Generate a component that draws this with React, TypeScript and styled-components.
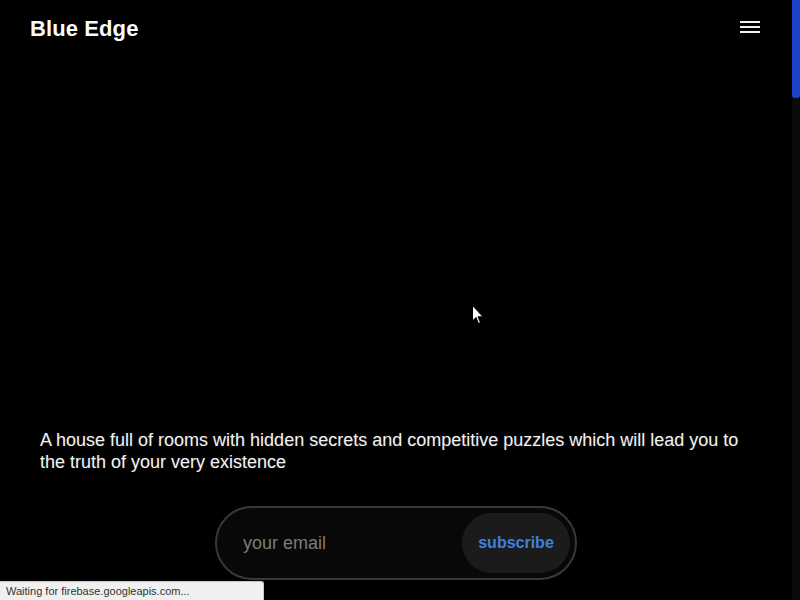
import React from 'react';
import styled, { createGlobalStyle } from 'styled-components';

const GlobalStyle = createGlobalStyle`
  html, body {
    margin: 0;
    padding: 0;
    background: #000;
    color: #fff;
    font-family: "Liberation Sans", Arial, sans-serif;
    overflow: hidden;
  }
`;

const Page = styled.div`
  display: flex;
  flex-direction: column;
  width: calc(100% - 8px);
  height: 100vh;
`;

const Header = styled.header`
  display: flex;
  align-items: center;
  justify-content: space-between;
  height: 58px;
  padding: 0 32px 0 30px;
`;

const Logo = styled.h1`
  margin: 0;
  font-size: 22px;
  font-weight: 700;
  color: #fafafa;
  letter-spacing: 0.1px;
`;

const MenuButton = styled.button`
  display: flex;
  flex-direction: column;
  gap: 3px;
  padding: 0;
  margin-top: -4px;
  background: none;
  border: none;
  cursor: pointer;

  span {
    display: block;
    width: 20px;
    height: 2px;
    background: #f2f2f2;
  }
`;

const Hero = styled.section`
  flex: 1;
  display: flex;
  flex-direction: column;
  justify-content: flex-end;
  padding: 0 40px 20px;
`;

const Tagline = styled.p`
  margin: 0 0 33px;
  font-size: 18px;
  line-height: 22px;
  color: #f2f2f2;
  text-shadow: 0 0 2px rgba(255, 255, 255, 0.15);
`;

const SubscribeForm = styled.form`
  align-self: center;
  display: flex;
  align-items: center;
  justify-content: space-between;
  width: 362px;
  height: 74px;
  box-sizing: border-box;
  border: 2px solid #383838;
  border-radius: 37px;
  background: #080808;
  padding: 0 5px 0 24px;
`;

const EmailInput = styled.input`
  flex: 1;
  min-width: 0;
  background: transparent;
  border: none;
  outline: none;
  color: #ddd;
  font-family: "Liberation Sans", Arial, sans-serif;
  font-size: 18px;

  &::placeholder {
    color: #7c7c7c;
  }
`;

const SubscribeButton = styled.button`
  width: 108px;
  height: 60px;
  border: none;
  border-radius: 30px;
  background: #1b1b1b;
  color: #3f80e0;
  font-family: "Liberation Sans", Arial, sans-serif;
  font-size: 16px;
  font-weight: 700;
  cursor: pointer;
`;

const ScrollTrack = styled.div`
  position: fixed;
  top: 0;
  right: 0;
  width: 8px;
  height: 100vh;
  background: #0b0b0b;
`;

const ScrollThumb = styled.div`
  height: 98px;
  background: #1c44c8;
  border-radius: 0 0 3px 3px;
`;

const StatusBar = styled.div`
  position: fixed;
  left: 0;
  bottom: 0;
  width: 264px;
  height: 19px;
  box-sizing: border-box;
  padding: 3px 0 0 6px;
  background: #f0f0f0;
  border: 1px solid #c8c8c8;
  border-left: none;
  border-bottom: none;
  border-top-right-radius: 3px;
  color: #333;
  font-family: "Liberation Sans", Arial, sans-serif;
  font-size: 11px;
  white-space: nowrap;
`;

const Cursor = styled.svg`
  position: fixed;
  left: 472px;
  top: 305px;
  width: 12px;
  height: 20px;
  pointer-events: none;
`;

export default function App() {
  return (
    <>
      <GlobalStyle />
      <Page>
        <Header>
          <Logo>Blue Edge</Logo>
          <MenuButton type="button" aria-label="menu">
            <span />
            <span />
            <span />
          </MenuButton>
        </Header>
        <Hero>
          <Tagline>
            A house full of rooms with hidden secrets and competitive puzzles which will lead you to the
            truth of your very existence
          </Tagline>
          <SubscribeForm onSubmit={(e) => e.preventDefault()}>
            <EmailInput type="email" placeholder="your email" />
            <SubscribeButton type="submit">subscribe</SubscribeButton>
          </SubscribeForm>
        </Hero>
      </Page>
      <ScrollTrack>
        <ScrollThumb />
      </ScrollTrack>
      <Cursor viewBox="0 0 12 20">
        <path d="M0.5 0.5 L0.5 16 L4 12.5 L6.5 18.5 L8.5 17.6 L6 11.8 L11 11.8 Z" fill="#fff" stroke="#000" strokeWidth="1" />
      </Cursor>
      <StatusBar>Waiting for firebase.googleapis.com...</StatusBar>
    </>
  );
}
